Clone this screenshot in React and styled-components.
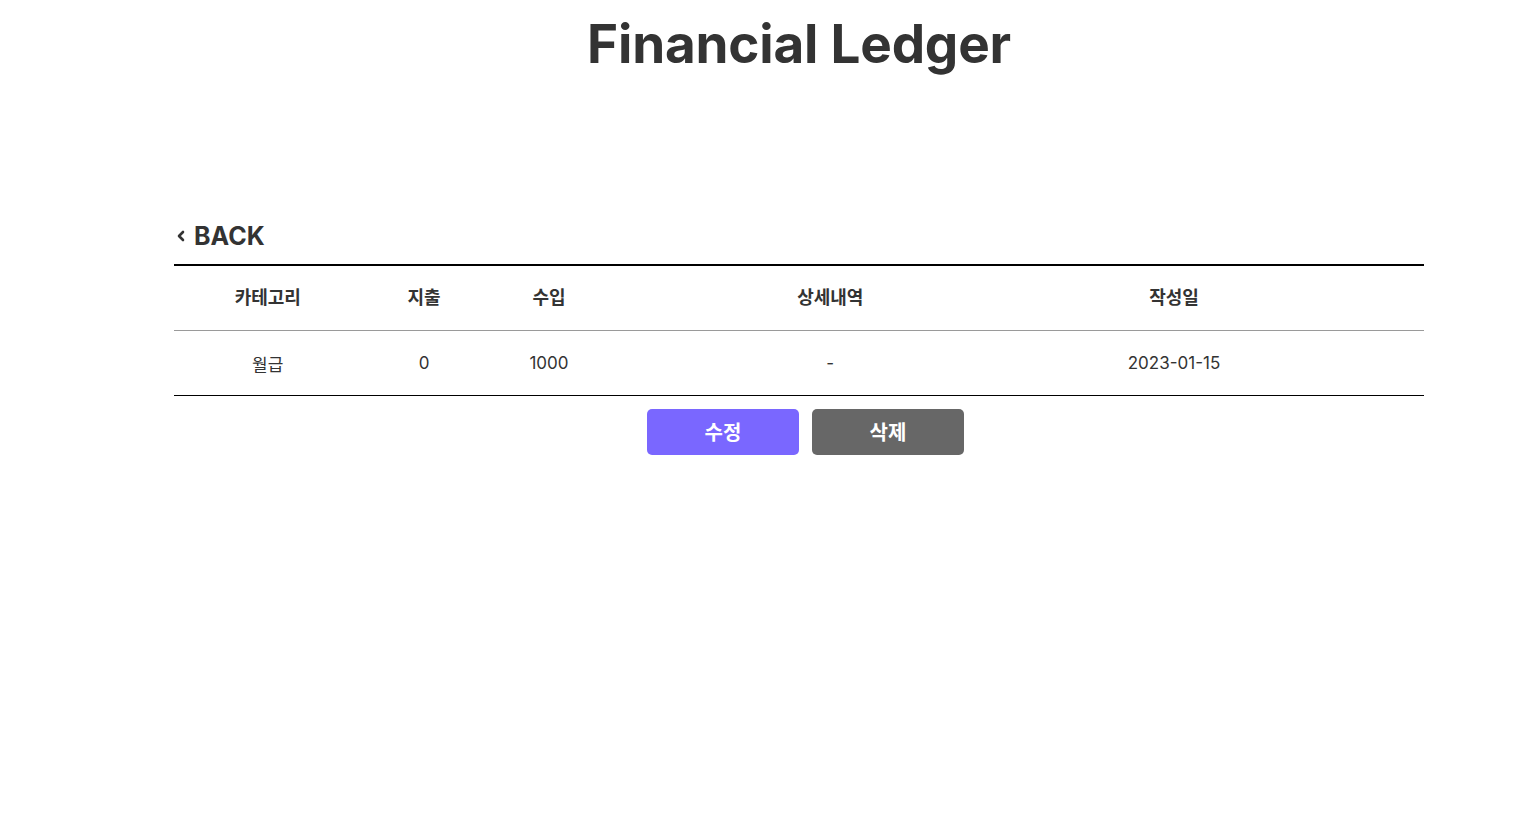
import React from "react";
import styled, { createGlobalStyle } from "styled-components";

const GlobalStyle = createGlobalStyle`
  body {
    margin: 0;
    background: #ffffff;
    font-family: "Inter", "Noto Sans CJK KR", sans-serif;
    color: #333333;
  }
`;

const Page = styled.div`
  padding-left: 71px;
  display: flex;
  flex-direction: column;
  align-items: center;
`;

const Title = styled.h1`
  margin: 14px 0 0;
  font-size: 53px;
  font-weight: 700;
  line-height: 60px;
  color: #333333;
  letter-spacing: -0.2px;
`;

const Content = styled.div`
  width: 1250px;
  margin-top: 149px;
  display: flex;
  flex-direction: column;
`;

const BackLink = styled.a`
  box-sizing: border-box;
  display: flex;
  align-items: center;
  gap: 8px;
  height: 34px;
  padding: 0 0 8px 2px;
  font-size: 25px;
  font-weight: 700;
  color: #333333;
  text-decoration: none;
  cursor: pointer;
`;

const Table = styled.div`
  margin-top: 7px;
  border-top: 2px solid #000000;
  border-bottom: 1px solid #000000;
`;

const Row = styled.div`
  display: grid;
  grid-template-columns: 15% 10% 10% 35% 20% 10%;
  height: 64px;
  align-items: center;
  border-bottom: ${(p) => (p.head ? "1px solid #9a9a9a" : "none")};
`;

const Cell = styled.div`
  text-align: center;
  padding-bottom: ${(p) => (p.head ? "4px" : "0")};
  font-size: ${(p) => (p.head ? "18px" : "17px")};
  font-weight: ${(p) => (p.head ? 700 : 400)};
  color: #333333;
`;

const Actions = styled.div`
  display: flex;
  justify-content: center;
  margin-top: 13px;
`;

const ActionButton = styled.button`
  width: 152px;
  height: 46px;
  margin-left: 13px;
  padding-bottom: 3px;
  border: none;
  border-radius: 5px;
  background-color: ${(p) => (p.danger ? "#676767" : "#7a67ff")};
  color: #ffffff;
  font-family: "Inter", "Noto Sans CJK KR", sans-serif;
  font-size: 20px;
  font-weight: 700;
  cursor: pointer;
`;

const headers = ["카테고리", "지출", "수입", "상세내역", "작성일", ""];
const record = ["월급", "0", "1000", "-", "2023-01-15", ""];

export default function App() {
  return (
    <>
      <GlobalStyle />
      <Page>
        <Title>Financial Ledger</Title>
        <Content>
          <BackLink>
            <svg width="10" height="12" viewBox="0 0 10 12">
              <path
                d="M7 2 L3 6 L7 10"
                fill="none"
                stroke="#333"
                strokeWidth="2.6"
                strokeLinecap="round"
                strokeLinejoin="round"
              />
            </svg>
            BACK
          </BackLink>
          <Table>
            <Row head>
              {headers.map((h, i) => (
                <Cell head key={i}>
                  {h}
                </Cell>
              ))}
            </Row>
            <Row>
              {record.map((v, i) => (
                <Cell key={i}>{v}</Cell>
              ))}
            </Row>
          </Table>
          <Actions>
            <ActionButton>수정</ActionButton>
            <ActionButton danger>삭제</ActionButton>
          </Actions>
        </Content>
      </Page>
    </>
  );
}
